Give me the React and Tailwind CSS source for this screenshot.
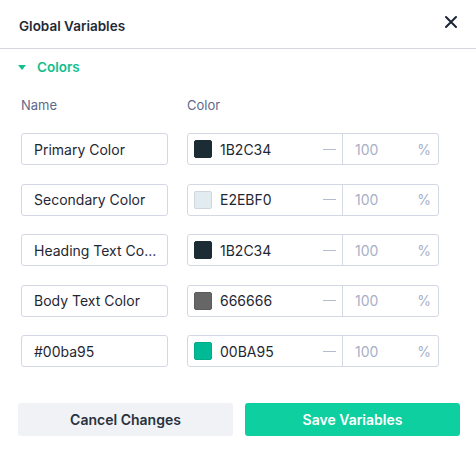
import React from "react";

const rows = [
  { name: "Primary Color", hex: "1B2C34", sw: "bg-[#1b2c34] border-[#1b2c34]" },
  { name: "Secondary Color", hex: "E2EBF0", sw: "bg-[#e2ebf0] border-[#cfd6de]" },
  { name: "Heading Text Co...", hex: "1B2C34", sw: "bg-[#1b2c34] border-[#1b2c34]" },
  { name: "Body Text Color", hex: "666666", sw: "bg-[#666666] border-[#5c5c5c]" },
  { name: "#00ba95", hex: "00BA95", sw: "bg-[#00ba95] border-[#00ab88]" },
];

export default function App() {
  return (
    <div className="w-[476px] h-[454px] bg-white text-[#1b2533] font-['Inter',sans-serif]">
      <div className="h-[49px] flex items-center justify-between pl-[19px] pr-[18px] border-b border-[#d5d8e2]">
        <span className="text-[13.5px] font-semibold text-[#1f2937] mt-[5px]">Global Variables</span>
        <svg width="14" height="14" viewBox="0 0 14 14" className="mt-[-4px]">
          <path d="M2 2L12 12M12 2L2 12" stroke="#1b2533" strokeWidth="2" strokeLinecap="round" />
        </svg>
      </div>
      <div className="flex items-center pl-[18px] pt-[2px] h-[35px]">
        <svg width="8" height="5" viewBox="0 0 8 5" className="mr-[11px]">
          <path d="M0 0H8L4 5Z" fill="#10bf8d" />
        </svg>
        <span className="text-[13.5px] font-semibold text-[#10bf8d]">Colors</span>
      </div>
      <div className="px-[21px] pt-[12px]">
        <div className="flex text-[13px] text-[#5c6a8a] h-[20px] items-center">
          <span className="w-[166px]">Name</span>
          <span>Color</span>
        </div>
        <div className="flex flex-col gap-[18.5px] mt-[17px]">
          {rows.map((r, i) => (
            <div key={i} className="flex gap-[19px] h-[32px]">
              <div className="w-[147px] h-full border border-[#d3d8e4] rounded-[3px] flex items-center pl-[12px] text-[14px] text-[#1f2733] whitespace-nowrap overflow-hidden">
                {r.name}
              </div>
              <div className="w-[252px] h-full border border-[#d3d8e4] rounded-[3px] flex items-center text-[14px]">
                <div className="flex items-center w-[155px] h-full border-r border-[#d3d8e4] pl-[6px]">
                  <span className={`w-[18px] h-[18px] rounded-[2px] border ${r.sw}`} />
                  <span className="ml-[8px] text-[#1f2733] flex-1">{r.hex}</span>
                  <span className="w-[13px] h-[1px] bg-[#b4bccd] mr-[6px]" />
                </div>
                <div className="flex-1 flex items-center justify-between pl-[12px] pr-[7px] text-[#a8b0c6]">
                  <span>100</span>
                  <span>%</span>
                </div>
              </div>
            </div>
          ))}
        </div>
      </div>
      <div className="flex gap-[12px] pl-[18px] pr-[16px] mt-[36px]">
        <button className="flex-1 h-[33px] rounded-[3px] bg-[#f1f2f5] text-[14px] font-semibold text-[#27313f]">
          Cancel Changes
        </button>
        <button className="flex-1 h-[33px] rounded-[3px] bg-[#0ecf9f] text-[14px] font-semibold text-white">
          Save Variables
        </button>
      </div>
    </div>
  );
}
